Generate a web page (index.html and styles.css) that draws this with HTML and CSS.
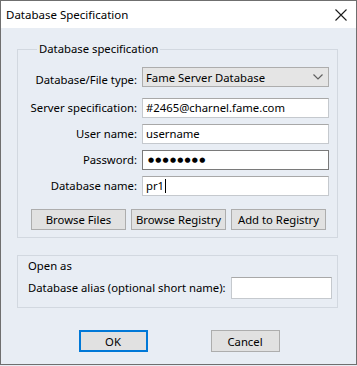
FILE: index.html
```html
<!DOCTYPE html>
<html lang="en">
<head>
    <meta charset="UTF-8">
    <title>Database Specification</title>
    <link rel="stylesheet" href="styles.css">
</head>
<body>
    <div class="dialog">
        <div class="titlebar">
            <span class="title">Database Specification</span>
            <span class="close">
                <svg width="12" height="12" viewBox="0 0 12 12">
                    <path d="M0.5 0.5 L11.5 11.5 M11.5 0.5 L0.5 11.5" stroke="#1a1a1a" stroke-width="1.1" fill="none"/>
                </svg>
            </span>
        </div>

        <div class="dialog-body">
            <fieldset class="group">
                <legend>Database specification</legend>

                <div class="form-grid">
                    <label class="form-label">Database/File type:</label>
                    <div class="select">
                        <span>Fame Server Database</span>
                        <svg width="10" height="6" viewBox="0 0 10 6">
                            <path d="M0.5 0.5 L5 5 L9.5 0.5" stroke="#606060" stroke-width="1.2" fill="none"/>
                        </svg>
                    </div>

                    <label class="form-label">Server specification:</label>
                    <div class="field">#2465@charnel.fame.com</div>

                    <label class="form-label">User name:</label>
                    <div class="field">username</div>

                    <label class="form-label">Password:</label>
                    <div class="field field-active"><span class="dots">●●●●●●●●</span></div>

                    <label class="form-label">Database name:</label>
                    <div class="field">pr1<span class="caret"></span></div>
                </div>

                <div class="browse-actions">
                    <button class="btn btn-browse">Browse Files</button>
                    <button class="btn btn-browse">Browse Registry</button>
                    <button class="btn btn-browse">Add to Registry</button>
                </div>
            </fieldset>

            <div class="group group-alias">
                <div class="group-title">Open as</div>
                <div class="alias-row">
                    <label class="form-label">Database alias (optional short name):</label>
                    <div class="field field-alias"></div>
                </div>
            </div>

            <div class="actions">
                <button class="btn btn-dialog btn-default">OK</button>
                <button class="btn btn-dialog">Cancel</button>
            </div>
        </div>
    </div>
</body>
</html>
```

FILE: styles.css
```css
:root {
    --dialog-bg: #e8edf4;
    --group-border: #d2d8e0;
    --button-bg: #e1e1e1;
    --button-border: #adadad;
    --field-border: #c5c9ce;
    --accent-color: #0078d7;
    --text-color: #000000;
}

* {
    margin: 0;
    padding: 0;
    box-sizing: border-box;
    font-family: 'Noto Sans', 'Open Sans', sans-serif;
}

body {
    background-color: var(--dialog-bg);
    color: var(--text-color);
    font-size: 11.3px;
}

.dialog {
    width: 357px;
    height: 365px;
    border: 1px solid #6f6f6f;
    background-color: var(--dialog-bg);
}

.titlebar {
    height: 27px;
    background: white;
    display: flex;
    align-items: center;
    justify-content: space-between;
    padding: 0 9px 0 5px;
}

.title {
    font-size: 11.5px;
}

.close {
    display: flex;
}

.dialog-body {
    padding: 13px 18px 0 16px;
}

.group {
    border: 1px solid var(--group-border);
    padding: 10px 6px 7px 12px;
}

.group legend {
    padding: 0 2px;
    margin-left: 7px;
    line-height: 16px;
}

.form-grid {
    display: grid;
    grid-template-columns: 107px 187px;
    column-gap: 5px;
    row-gap: 6px;
    align-items: center;
}

.form-label {
    text-align: right;
    line-height: 16px;
    white-space: nowrap;
}

.select {
    height: 20px;
    background: #e5e5e5;
    border: 1px solid var(--button-border);
    display: flex;
    align-items: center;
    justify-content: space-between;
    padding: 0 5px 0 3px;
    margin-bottom: 5px;
}

.field {
    height: 20px;
    background: white;
    border: 1px solid var(--field-border);
    border-top-color: #a8a8a8;
    padding: 0 3px;
    line-height: 18px;
    white-space: nowrap;
    display: flex;
    align-items: center;
}

.field-active {
    border-color: #7a7a7a;
}

.dots {
    font-family: 'DejaVu Sans', sans-serif;
    font-size: 7px;
    letter-spacing: 1.2px;
    padding-left: 2px;
}

.caret {
    display: inline-block;
    width: 1px;
    height: 14px;
    background: #000;
    margin-left: 1px;
}

.browse-actions {
    display: flex;
    gap: 5px;
    margin-top: 13px;
    padding-left: 1px;
}

.btn {
    height: 21px;
    background: var(--button-bg);
    border: 1px solid var(--button-border);
    font-size: 11.3px;
    color: var(--text-color);
}

.btn-browse {
    width: 95px;
}

.group-alias {
    margin-top: 17px;
    padding: 2px 5px 8px 10px;
    width: 321px;
}

.group-title {
    line-height: 16px;
}

.alias-row {
    display: flex;
    align-items: center;
    justify-content: space-between;
    margin-top: 3px;
}

.field-alias {
    width: 101px;
    height: 22px;
}

.actions {
    display: flex;
    justify-content: center;
    gap: 63px;
    margin-top: 22px;
    padding-left: 3px;
}

.btn-dialog {
    width: 69px;
    height: 22px;
}

.btn-default {
    border: 2px solid var(--accent-color);
}
```
